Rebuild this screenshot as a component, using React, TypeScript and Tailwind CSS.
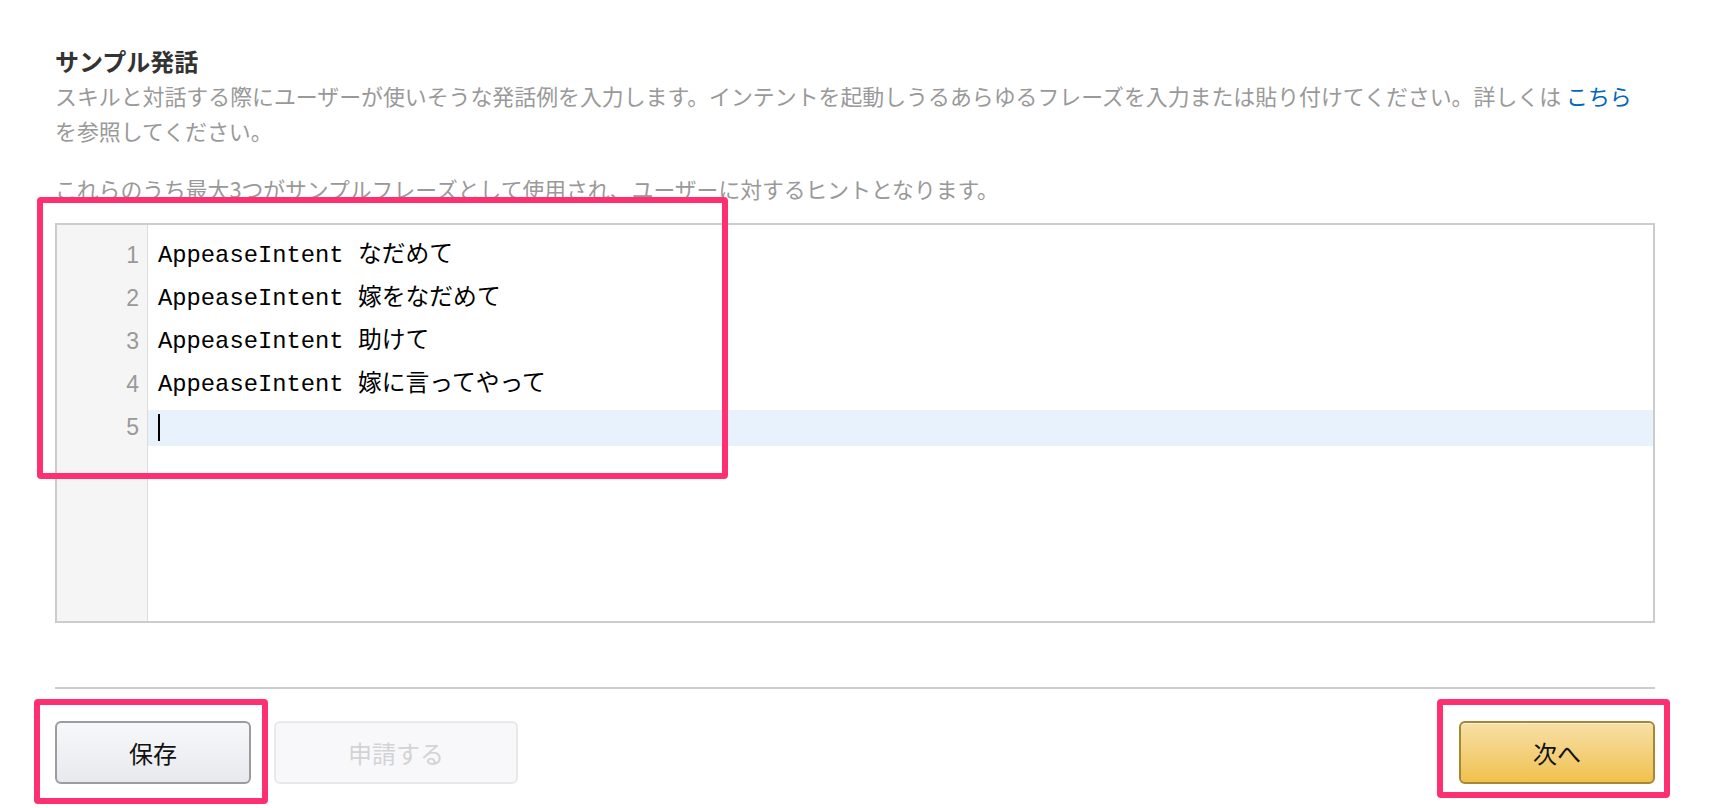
import React from "react";

const lines = ["なだめて", "嫁をなだめて", "助けて", "嫁に言ってやって"];

export default function App() {
  return (
    <div className="relative min-h-[808px] w-full bg-white pl-[55px] pr-[57px] pt-[43px] font-['Noto_Sans_CJK_JP','Noto_Sans',sans-serif]">
      <h2 className="text-[24px] leading-[35px] font-bold text-[#333]">サンプル発話</h2>
      <p className="text-[21.9px] leading-[35px] text-[#999]">
        スキルと対話する際にユーザーが使いそうな発話例を入力します。インテントを起動しうるあらゆるフレーズを入力または貼り付けてください。詳しくは <span className="text-[#0066c0]">こちら</span>
        <br />
        を参照してください。
      </p>
      <p className="mt-[23px] text-[21.8px] leading-[35px] text-[#999]">
        これらのうち最大3つがサンプルフレーズとして使用され、ユーザーに対するヒントとなります。
      </p>

      <div className="mt-[17px] flex h-[400px] border-2 border-[#cccccc] bg-white">
        <div className="flex w-[91px] flex-col border-r border-[#dddddd] bg-[#f5f5f5] pt-[9px] font-['Liberation_Sans',sans-serif] text-[23px] text-[#999]">
          {[1, 2, 3, 4, 5].map((n) => (
            <div key={n} className="flex h-[43px] items-center justify-end pr-[8px]">
              {n}
            </div>
          ))}
        </div>
        <div className="flex flex-1 flex-col pt-[9px] font-['Liberation_Mono','Noto_Sans_CJK_JP',monospace] text-[23.8px] text-[#000]">
          {lines.map((l, i) => (
            <div key={i} className="flex h-[43px] items-center whitespace-pre pl-[10px]">
              {"AppeaseIntent " + l}
            </div>
          ))}
          <div className="flex h-[43px] items-center">
            <div className="flex h-[36px] w-full items-center bg-[#e8f2fd] pl-[10px]">
              <span className="block h-[27px] w-[2px] bg-black" />
            </div>
          </div>
        </div>
      </div>

      <div className="mt-[64px] border-t-2 border-[#cccccc]" />

      <div className="mt-[32px] flex items-center justify-between">
        <div className="flex items-center gap-[23px]">
          <button className="flex h-[63px] w-[196px] items-center justify-center rounded-[6px] border-2 border-[#9a9ca1] bg-linear-to-b from-[#f7f8fa] to-[#e7e9ec] text-[24px] text-[#111]">
            保存
          </button>
          <button className="flex h-[63px] w-[244px] items-center justify-center rounded-[6px] border-2 border-[#e9e9e9] bg-[#f8f8fa] text-[24px] text-[#d3d3d3]">
            申請する
          </button>
        </div>
        <button className="flex h-[63px] w-[196px] items-center justify-center rounded-[6px] border-2 border-[#a88734] bg-linear-to-b from-[#f7dfa5] to-[#f0c14b] text-[24px] text-[#111] shadow-[inset_0_1px_0_rgba(255,255,255,0.6)]">
          次へ
        </button>
      </div>

      <div className="pointer-events-none absolute left-[37px] top-[197px] h-[282px] w-[691px] rounded-[4px] border-[6px] border-[#ff3071]" />
      <div className="pointer-events-none absolute left-[34px] top-[699px] h-[105px] w-[234px] rounded-[4px] border-[6px] border-[#ff3071]" />
      <div className="pointer-events-none absolute left-[1437px] top-[699px] h-[99px] w-[233px] rounded-[4px] border-[6px] border-[#ff3071]" />
    </div>
  );
}
